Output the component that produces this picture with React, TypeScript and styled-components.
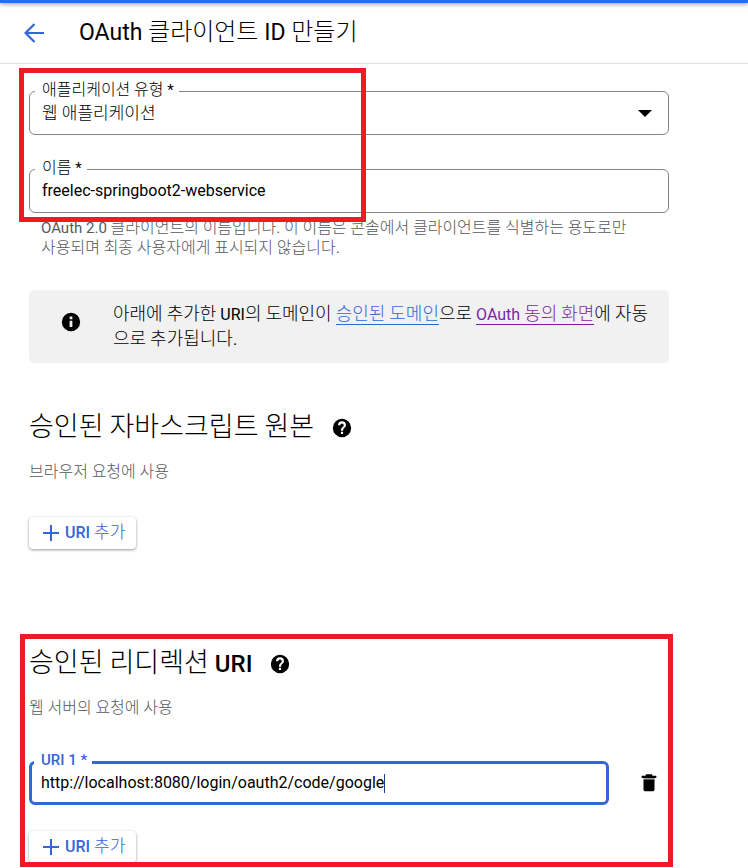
import React, { useState } from 'react';
import styled, { createGlobalStyle, css } from 'styled-components';

const BLUE = '#3367d6';
const RED = '#ed1c24';

const GlobalStyle = createGlobalStyle`
  * { box-sizing: border-box; }
  body {
    margin: 0;
    background: #fff;
    color: #000;
    font-family: Roboto, "Noto Sans CJK KR", sans-serif;
    font-size: 16px;
  }
  h1, h2, p { margin: 0; font-weight: 400; }
`;

/* Hangul is set slightly larger than the Latin text around it. */
const Hangul = styled.span`
  font-size: var(--hangul);
  font-weight: 300;
  line-height: 1;
`;

function Mixed({ children }: { children: string }) {
  const parts = children.split(/([\uac00-\ud7a3]+)/);
  return (
    <>
      {parts.map((part, i) =>
        i % 2 ? <Hangul key={i}>{part}</Hangul> : <React.Fragment key={i}>{part}</React.Fragment>
      )}
    </>
  );
}

const TopBar = styled.div`
  height: 3px;
  background: #1a73e8;
  box-shadow: 0 1px 4px rgba(0, 0, 0, 0.5);
`;

const Header = styled.header`
  display: flex;
  align-items: center;
  gap: 30px;
  height: 61px;
  padding: 0 19px;
  border-bottom: 1px solid #e0e0e0;
`;

const IconButton = styled.button`
  display: inline-flex;
  align-items: center;
  justify-content: center;
  flex: none;
  width: 30px;
  height: 30px;
  padding: 0;
  border: 0;
  background: none;
  color: inherit;
  cursor: pointer;
`;

const BackButton = styled(IconButton)`
  color: ${BLUE};
`;

const Title = styled.h1`
  --hangul: 24px;
  font-size: 23px;
  line-height: 32px;
`;

const Main = styled.main`
  display: flex;
  flex-direction: column;
  max-width: 669px;
  padding: 27px 0 5px 29px;
`;

const Framed = styled.div`
  position: relative;
`;

const Highlight = styled.div<{ $inset: string }>`
  position: absolute;
  inset: ${(p) => p.$inset};
  border: 5px solid ${RED};
  pointer-events: none;
`;

const FieldGroup = styled.div`
  display: flex;
  flex-direction: column;
  gap: 34px;
`;

const Field = styled.div<{ $active?: boolean }>`
  position: relative;
  display: flex;
  align-items: center;
  flex: 1;
  min-height: 44px;
  padding: 0 12px;
  border: 1px solid #80868b;
  border-radius: 6px;
  ${(p) =>
    p.$active &&
    css`
      padding: 0 9px;
      border: 3px solid ${BLUE};
    `}
`;

const FieldLabel = styled.label<{ $active?: boolean }>`
  --hangul: 16px;
  position: absolute;
  top: -13px;
  left: 5px;
  padding: 0 5px 0 7px;
  background: #fff;
  font-size: 15px;
  line-height: 22px;
  ${(p) =>
    p.$active &&
    css`
      top: -15px;
      left: 2px;
      color: ${BLUE};
      font-weight: 500;
    `}
`;

const controlText = css`
  border: 0;
  outline: 0;
  padding: 0;
  margin: 0;
  background: none;
  color: #000;
  font-family: inherit;
  font-size: 16px;
  line-height: 24px;
`;

const Input = styled.input<{ $fit?: boolean }>`
  ${controlText}
  width: 100%;
  ${(p) =>
    p.$fit &&
    css`
      width: auto;
      field-sizing: content;
    `}
`;

const Caret = styled.span`
  width: 1px;
  height: 19px;
  background: #1a3f8f;
`;

const Select = styled.select`
  ${controlText}
  appearance: none;
  width: 100%;
  font-size: 17px;
  font-weight: 300;
`;

const Arrow = styled.svg`
  flex: none;
  margin-right: 4px;
`;

const Hint = styled.p`
  --hangul: 16px;
  padding: 5px 28px 0 12px;
  color: #55585c;
  font-size: 15px;
  line-height: 20px;
`;

const Banner = styled.aside`
  --hangul: 18px;
  display: flex;
  align-items: flex-start;
  gap: 31px;
  margin-top: 32px;
  padding: 12px 16px 11px 31px;
  border-radius: 5px;
  background: #f1f1f1;
  font-size: 16px;
  line-height: 25px;
  svg {
    flex: none;
    margin-top: 9px;
  }
`;

const Link = styled.a<{ $visited?: boolean }>`
  color: ${(p) => (p.$visited ? '#7b1fa2' : BLUE)};
  border-bottom: 1px solid;
  text-decoration: none;
`;

const Section = styled.section<{ $gap: number }>`
  position: relative;
  display: flex;
  flex-direction: column;
  align-items: flex-start;
  margin-top: ${(p) => p.$gap}px;
`;

const HeadingRow = styled.div`
  display: flex;
  align-items: center;
  gap: 15px;
`;

const Heading = styled.h2`
  --hangul: 27px;
  font-size: 24px;
  font-weight: 500;
  line-height: 36px;
`;

const HelpButton = styled(IconButton)`
  width: 26px;
`;

const Sub = styled.p`
  --hangul: 16px;
  margin-top: 15px;
  color: #55585c;
  font-size: 15px;
  line-height: 22px;
`;

const AddButton = styled.button<{ $gap: number }>`
  --hangul: 17px;
  display: inline-flex;
  align-items: center;
  gap: 5px;
  height: 32px;
  margin-top: ${(p) => p.$gap}px;
  padding: 0 11px 0 12px;
  border: 0;
  border-radius: 4px;
  background: #fff;
  box-shadow: 0 1px 3px rgba(0, 0, 0, 0.4);
  color: ${BLUE};
  font-family: inherit;
  font-size: 16px;
  font-weight: 500;
  line-height: 24px;
  white-space: pre;
  cursor: pointer;
`;

const UriRow = styled.div`
  display: flex;
  align-items: center;
  align-self: stretch;
  gap: 25px;
  margin-top: 42px;
  padding-right: 5px;
`;

const Glyph = ({ d, size = 22 }: { d: string; size?: number }) => (
  <svg width={size} height={size} viewBox="0 0 24 24" fill="currentColor" aria-hidden="true">
    <path d={d} />
  </svg>
);

const INFO =
  'M12 2a10 10 0 1 0 0 20 10 10 0 0 0 0-20zm1.500 15.500h-3v-7h3zm0-8.500h-3V6h3z';
const HELP =
  'M12 2a10 10 0 1 0 0 20 10 10 0 0 0 0-20zm1.200 16.500h-2.400v-2.300h2.400zm2.300-7.600-.9.900c-.9.900-1.400 1.600-1.400 3.200h-2.400v-.5c0-1.200.5-2.200 1.300-3l1.200-1.200c.4-.4.600-.9.600-1.400a1.900 1.900 0 0 0-3.800 0H7.700a4.300 4.300 0 0 1 8.600 0c0 .8-.3 1.500-.8 2z';
const TRASH_BODY = 'M6 19c0 1.100.9 2 2 2h8c1.100 0 2-.9 2-2V8H6z';
const TRASH_LID = 'M20 4h-4l-1-1.500H9L8 4H4v2.500h16z';

const BackIcon = () => (
  <svg width="20" height="20" viewBox="0 0 20 20" fill="none" stroke="currentColor" strokeWidth="2.200" aria-hidden="true">
    <path d="M20 10H2M10.500 1 1.500 10l9 9" />
  </svg>
);

const PlusIcon = () => (
  <svg width="19" height="16" viewBox="0 0 19 16" fill="none" stroke="currentColor" strokeWidth="2" aria-hidden="true">
    <path d="M2 8h16M10 0v16" />
  </svg>
);

export default function App() {
  const [name, setName] = useState('freelec-springboot2-webservice');
  const [uri, setUri] = useState('http://localhost:8080/login/oauth2/code/google');

  return (
    <>
      <GlobalStyle />
      <TopBar />
      <Header>
        <BackButton aria-label="뒤로">
          <BackIcon />
        </BackButton>
        <Title>
          <Mixed>OAuth 클라이언트 ID 만들기</Mixed>
        </Title>
      </Header>
      <Main>
        <Framed>
          <FieldGroup>
            <Field>
              <FieldLabel htmlFor="type">
                <Mixed>애플리케이션 유형 *</Mixed>
              </FieldLabel>
              <Select id="type">
                <option>웹 애플리케이션</option>
              </Select>
              <Arrow width="14" height="7" viewBox="0 0 14 7" aria-hidden="true">
                <path d="M0 0h14L7 7z" />
              </Arrow>
            </Field>
            <Field>
              <FieldLabel htmlFor="name">
                <Mixed>이름 *</Mixed>
              </FieldLabel>
              <Input id="name" value={name} onChange={(e) => setName(e.target.value)} />
            </Field>
          </FieldGroup>
          <Highlight $inset="-23px 303px -9px -10px" />
        </Framed>
        <Hint>
          <Mixed>
            OAuth 2.0 클라이언트의 이름입니다. 이 이름은 콘솔에서 클라이언트를 식별하는 용도로만 사용되며 최종 사용자에게 표시되지 않습니다.
          </Mixed>
        </Hint>
        <Banner>
          <Glyph d={INFO} />
          <p>
            <Mixed>아래에 추가한 URI의 도메인이 </Mixed>
            <Link href="#domains">
              <Mixed>승인된 도메인</Mixed>
            </Link>
            <Mixed>으로 </Mixed>
            <Link href="#consent" $visited>
              <Mixed>OAuth 동의 화면</Mixed>
            </Link>
            <Mixed>에 자동으로 추가됩니다.</Mixed>
          </p>
        </Banner>
        <Section $gap={47}>
          <HeadingRow>
            <Heading>
              <Mixed>승인된 자바스크립트 원본</Mixed>
            </Heading>
            <HelpButton aria-label="도움말">
              <Glyph d={HELP} />
            </HelpButton>
          </HeadingRow>
          <Sub>
            <Mixed>브라우저 요청에 사용</Mixed>
          </Sub>
          <AddButton $gap={34}>
            <PlusIcon />
            <span>
              <Mixed>URI 추가</Mixed>
            </span>
          </AddButton>
        </Section>
        <Section $gap={97}>
          <HeadingRow>
            <Heading>
              <Mixed>승인된 리디렉션 URI</Mixed>
            </Heading>
            <HelpButton aria-label="도움말">
              <Glyph d={HELP} />
            </HelpButton>
          </HeadingRow>
          <Sub>
            <Mixed>웹 서버의 요청에 사용</Mixed>
          </Sub>
          <UriRow>
            <Field $active>
              <FieldLabel htmlFor="uri" $active>
                URI 1 *
              </FieldLabel>
              <Input id="uri" $fit value={uri} onChange={(e) => setUri(e.target.value)} />
              <Caret />
            </Field>
            <IconButton aria-label="삭제">
              <svg width="22" height="22" viewBox="0 0 24 24" aria-hidden="true">
                <path d={TRASH_BODY} />
                <path d={TRASH_LID} />
                <path d="M6 6.500h12V8H6z" fill="#999" />
              </svg>
            </IconButton>
          </UriRow>
          <AddButton $gap={26}>
            <PlusIcon />
            <span>
              <Mixed>URI 추가</Mixed>
            </span>
          </AddButton>
          <Highlight $inset="-12px -4px -4px -9px" />
        </Section>
      </Main>
    </>
  );
}
